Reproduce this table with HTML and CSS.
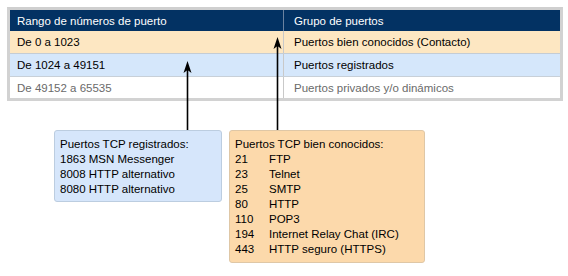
FILE: index.html
```html
<!DOCTYPE html>
<html lang="es">
<head>
<meta charset="utf-8">
<title>Puertos</title>
<link rel="stylesheet" href="styles.css">
</head>
<body>
<div class="page">
  <div class="table-frame">
    <div class="ports">
      <div class="row head">
        <div class="cell c1">Rango de números de puerto</div>
        <div class="cell c2">Grupo de puertos</div>
      </div>
      <div class="row well">
        <div class="cell c1">De 0 a 1023</div>
        <div class="cell c2">Puertos bien conocidos (Contacto)</div>
      </div>
      <div class="row reg">
        <div class="cell c1">De 1024 a 49151</div>
        <div class="cell c2">Puertos registrados</div>
      </div>
      <div class="row dyn">
        <div class="cell c1">De 49152 a 65535</div>
        <div class="cell c2">Puertos privados y/o dinámicos</div>
      </div>
    </div>
  </div>

  <div class="callouts">
    <div class="note blue">
      <div>Puertos TCP registrados:</div>
      <div>1863 MSN Messenger</div>
      <div>8008 HTTP alternativo</div>
      <div>8080 HTTP alternativo</div>
    </div>
    <div class="note orange">
      <div class="title">Puertos TCP bien conocidos:</div>
      <div class="list">
        <span>21</span><span>FTP</span>
        <span>23</span><span>Telnet</span>
        <span>25</span><span>SMTP</span>
        <span>80</span><span>HTTP</span>
        <span>110</span><span>POP3</span>
        <span>194</span><span>Internet Relay Chat (IRC)</span>
        <span>443</span><span>HTTP seguro (HTTPS)</span>
      </div>
    </div>
  </div>

  <svg class="arrows" width="568" height="276" viewBox="0 0 568 276" aria-hidden="true">
    <line x1="187.5" y1="68" x2="187.5" y2="130" stroke="#000" stroke-width="1.6"/>
    <path d="M187.5 61 L191.5 73 L187.5 70 L183.5 73 Z" fill="#000"/>
    <line x1="277.5" y1="44" x2="277.5" y2="130" stroke="#000" stroke-width="1.6"/>
    <path d="M277.5 37 L281.5 49 L277.5 46 L273.5 49 Z" fill="#000"/>
  </svg>
</div>
</body>
</html>
```

FILE: styles.css
```css
* { box-sizing: border-box; }
html, body { margin: 0; padding: 0; background: #fff; }
body {
  font-family: "Liberation Sans", Arial, Helvetica, sans-serif;
  font-size: 11.5px;
  color: #000;
}
.page {
  position: relative;
  width: 568px;
  height: 276px;
  padding: 7px 5px 0 7px;
}
.table-frame {
  border: 3px solid #d2d2d2;
  border-top-color: #cfcfcf;
  width: 556px;
}
.ports { display: flex; flex-direction: column; }
.row {
  display: grid;
  grid-template-columns: 274px 1fr;
  align-items: center;
}
.cell { display: flex; align-items: center; height: 100%; }
.c1 { padding-left: 7px; border-right: 1px solid #c9c9c9; }
.c2 { padding-left: 10px; }
.head { height: 21px; background: #033263; color: #fff; }
.head .c1 { border-right-color: #6c83a0; }
.well { height: 23px; background: #fde7c2; border-bottom: 1px solid #c4ccd4; }
.reg { height: 23px; background: #d5e7fb; border-bottom: 1px solid #c8d0d8; }
.dyn { height: 21px; background: #fff; color: #6a6a6a; }

.callouts {
  display: flex;
  align-items: flex-start;
  gap: 7px;
  margin-top: 29px;
  padding-left: 47px;
}
.note {
  border-radius: 3px;
  line-height: 15px;
  padding: 6px 5px 4px;
}
.blue {
  width: 168px;
  height: 72px;
  background: #d6e6fb;
  border: 1px solid #bccde0;
}
.orange {
  width: 196px;
  height: 133px;
  background: #fcd9ab;
  border: 1px solid #dfc7a6;
}
.list {
  display: grid;
  grid-template-columns: 34px auto;
}
.arrows {
  position: absolute;
  left: 0;
  top: 0;
  pointer-events: none;
}
```
